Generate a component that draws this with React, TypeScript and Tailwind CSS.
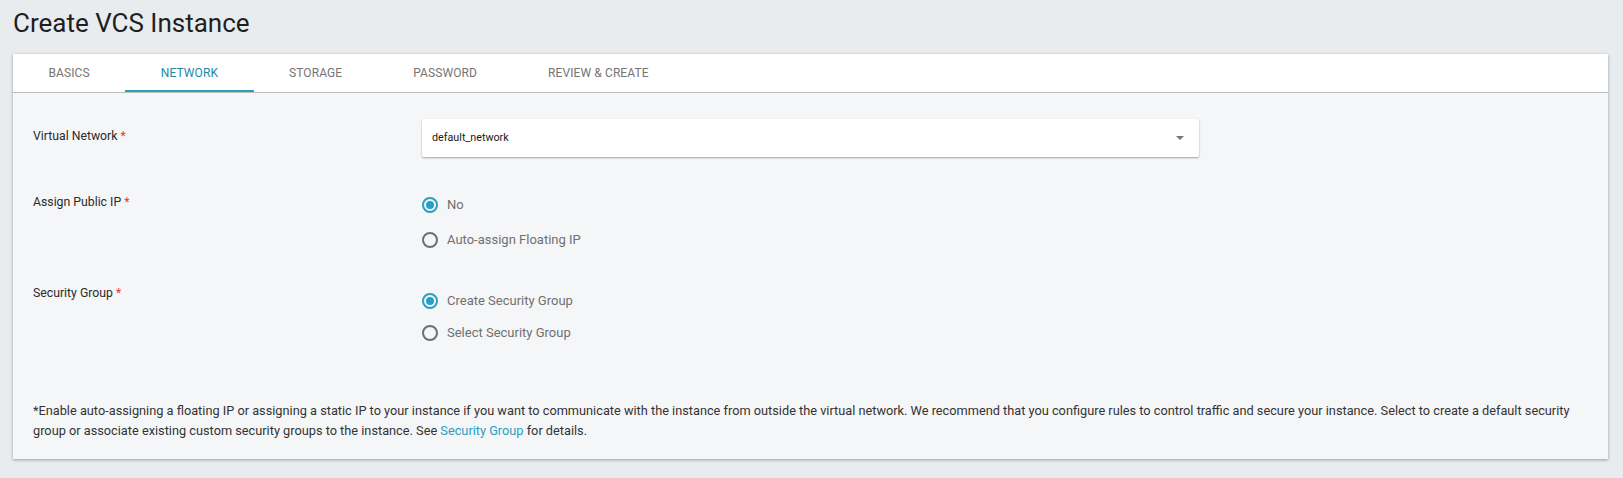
import React, { useState } from 'react';

const tabs = ['BASICS', 'NETWORK', 'STORAGE', 'PASSWORD', 'REVIEW & CREATE'];

const Radio = ({ checked, label, onClick }: { checked: boolean; label: string; onClick: () => void }) => (
  <button type="button" onClick={onClick} className="flex h-[24px] items-center gap-[9px] text-left">
    <span
      className={`flex h-[16px] w-[16px] items-center justify-center rounded-full border-2 ${
        checked ? 'border-[#29a0bf]' : 'border-[#6f6f6f]'
      }`}
    >
      {checked && <span className="h-[8px] w-[8px] rounded-full bg-[#29a0bf]" />}
    </span>
    <span className="text-[13px] text-[#707070]">{label}</span>
  </button>
);

const Label = ({ children, className = '' }: { children: React.ReactNode; className?: string }) => (
  <div className={`w-[389px] shrink-0 text-[12.25px] leading-[18px] text-[#2b2b2b] ${className}`}>
    {children} <span className="text-[#e53935]">*</span>
  </div>
);

export default function App() {
  const [active, setActive] = useState(1);
  const [publicIp, setPublicIp] = useState('no');
  const [secGroup, setSecGroup] = useState('create');

  return (
    <div className="min-h-[478px] bg-[#e9ecef] pb-[16px] font-['Roboto','Liberation_Sans',sans-serif]">
      <h1 className="pl-[13px] pt-[8px] text-[26px] leading-[30px] font-normal text-[#1f1f1f]">Create VCS Instance</h1>

      <div className="ml-[13px] mr-[15px] mt-[16px] shadow-[0_1px_3px_rgba(0,0,0,0.35)]">
        <div className="flex h-[39px] border-b border-[#bdbdbd] bg-white">
          {tabs.map((t, i) => (
            <button
              key={t}
              type="button"
              onClick={() => setActive(i)}
              className={`relative px-[35.5px] text-[12px] tracking-[0.1px] ${
                i === active ? 'text-[#1d89a7]' : 'text-[#757575]'
              }`}
            >
              {t}
              {i === active && <span className="absolute bottom-0 left-0 right-0 h-[2px] bg-[#2a9fbd]" />}
            </button>
          ))}
        </div>

        <div className="bg-[#f5f6f8] px-[20px] pb-[18px] pt-[26px]">
          <div className="flex">
            <Label className="pt-[8px]">Virtual Network</Label>
            <div className="flex h-[38px] w-[777px] items-center justify-between rounded-[2px] bg-white pl-[10px] pr-[15px] shadow-[0_1px_2px_rgba(0,0,0,0.35)]">
              <span className="text-[10.75px] text-[#1a1a1a]">default_network</span>
              <svg width="8" height="4" viewBox="0 0 8 4">
                <path d="M0 0h8L4 4z" fill="#757575" />
              </svg>
            </div>
          </div>

          <div className="mt-[36px] flex">
            <Label>Assign Public IP</Label>
            <div className="flex flex-col gap-[11px]">
              <Radio checked={publicIp === 'no'} label="No" onClick={() => setPublicIp('no')} />
              <Radio checked={publicIp === 'auto'} label="Auto-assign Floating IP" onClick={() => setPublicIp('auto')} />
            </div>
          </div>

          <div className="mt-[37px] flex">
            <Label className="-mt-[5px]">Security Group</Label>
            <div className="flex flex-col gap-[8px]">
              <Radio checked={secGroup === 'create'} label="Create Security Group" onClick={() => setSecGroup('create')} />
              <Radio checked={secGroup === 'select'} label="Select Security Group" onClick={() => setSecGroup('select')} />
            </div>
          </div>

          <p className="mt-[56px] text-[12.75px] leading-[20px] text-[#333333]">
            *Enable auto-assigning a floating IP or assigning a static IP to your instance if you want to communicate with the
            instance from outside the virtual network. We recommend that you configure rules to control traffic and secure your
            instance. Select to create a default security group or associate existing custom security groups to the instance. See{' '}
            <a href="#" className="text-[#2a9fc1]">Security Group</a> for details.
          </p>
        </div>
      </div>
    </div>
  );
}
